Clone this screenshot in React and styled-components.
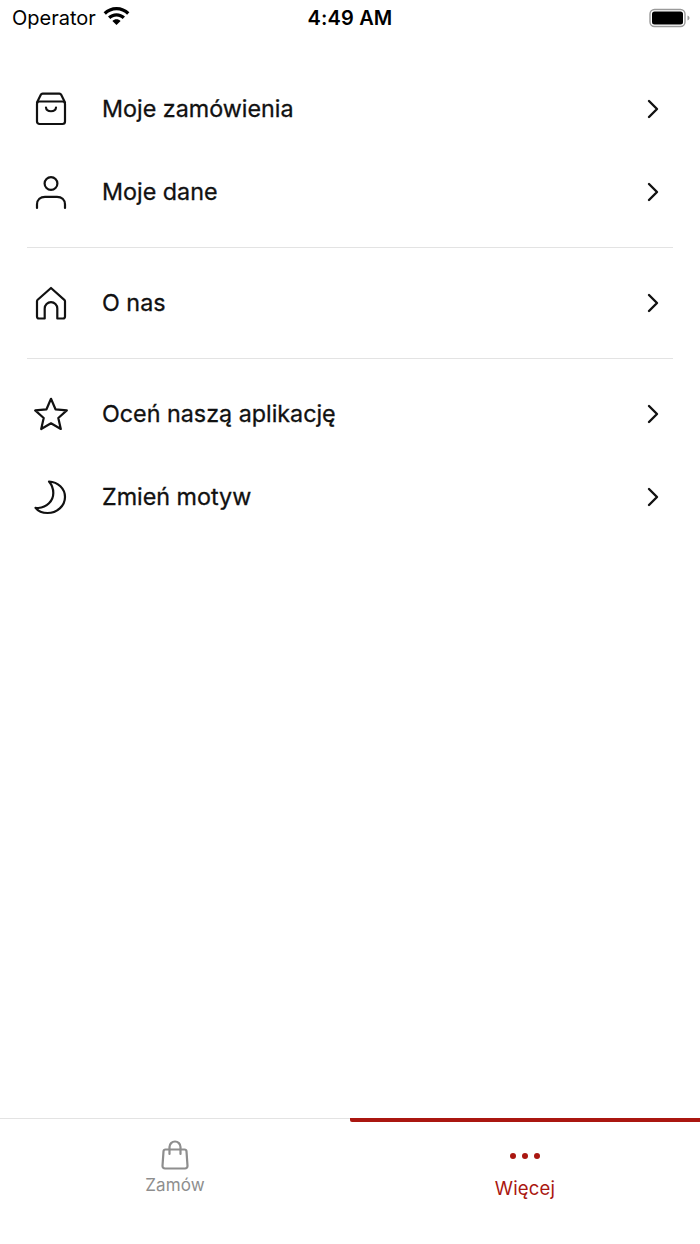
import React from "react";
import styled, { createGlobalStyle } from "styled-components";

const Global = createGlobalStyle`
  html, body { margin: 0; padding: 0; background: #fff; }
  body { font-family: Inter, "Liberation Sans", sans-serif; }
`;

const Page = styled.div`
  width: 700px;
  height: 1244px;
  display: flex;
  flex-direction: column;
  background: #fff;
  overflow: hidden;
`;

const StatusBar = styled.div`
  height: 36px;
  display: grid;
  grid-template-columns: 1fr auto 1fr;
  align-items: center;
  padding: 0 12px;
  color: #000;
`;
const Carrier = styled.div`
  display: flex;
  align-items: center;
  gap: 7px;
  font-size: 20px;
  line-height: 24px;
`;
const Clock = styled.div`
  font-size: 20px;
  font-weight: 600;
  letter-spacing: 0.15px;
  line-height: 24px;
`;
const Battery = styled.div`
  justify-self: end;
  display: flex;
  margin-right: -3px;
`;

const Menu = styled.div`
  flex: 1;
  padding: 31.5px 27px 0;
`;
const Group = styled.div`
  padding: 14px 0 13px;
  border-bottom: ${p => (p.$last ? "none" : "1px solid #e3e3e3")};
  &:first-child { padding-top: 0; }
`;
const Row = styled.div`
  height: 83px;
  display: flex;
  align-items: center;
  color: #111;
`;
const IconSlot = styled.div`
  width: 48px;
  height: 36px;
  display: flex;
  justify-content: center;
  align-items: center;
  margin-right: 27px;
`;
const Label = styled.div`
  flex: 1;
  font-size: 23.3px;
  font-weight: 400;
  line-height: 30px;
  color: #111;
  -webkit-text-stroke: 0.3px #111;
`;
const Chevron = styled.svg`
  width: 16px;
  height: 22px;
  margin-right: 11px;
`;

const TabBar = styled.div`
  height: 126px;
  border-top: 1px solid #e3e3e3;
  display: grid;
  grid-template-columns: 1fr 1fr;
  box-sizing: border-box;
`;
const Tab = styled.div`
  position: relative;
  display: flex;
  flex-direction: column;
  align-items: center;
  color: ${p => (p.$active ? "#aa1710" : "#8e8e8e")};
  padding-top: ${p => (p.$active ? "26px" : "21px")};
  &::before {
    content: "";
    display: ${p => (p.$active ? "block" : "none")};
    position: absolute;
    left: 0;
    right: 0;
    top: -1px;
    height: 4px;
    background: #aa1710;
    border-bottom-left-radius: 2px;
  }
`;
const TabLabel = styled.div`
  font-size: ${p => (p.$active ? "18.500px" : "17px")};
  line-height: 22px;
  letter-spacing: ${p => (p.$active ? "0.2px" : "0.1px")};
  margin-top: ${p => (p.$active ? "10px" : "4px")};
`;

const stroke = { fill: "none", stroke: "currentColor", strokeLinecap: "round", strokeLinejoin: "round" };

const BoxIcon = () => (
  <svg width="34" height="36" viewBox="0 0 34 36" {...stroke} strokeWidth="2.200">
    <path d="M3 11.500 6.800 3.800a2 2 0 0 1 1.800-1.100h16.800a2 2 0 0 1 1.800 1.100L31 11.500" />
    <rect x="3" y="10.500" width="28" height="22.500" rx="2.500" />
    <path d="M12 16.500c.5 5 9.500 5 10 0" />
  </svg>
);
const UserIcon = () => (
  <svg width="34" height="36" viewBox="0 0 34 36" {...stroke} strokeWidth="2.200">
    <circle cx="17" cy="9.500" r="6.400" />
    <path d="M3 34v-3.500C3 25.500 6.500 22.800 11 22.800h12c4.500 0 8 2.700 8 7.700V34" />
  </svg>
);
const HomeIcon = () => (
  <svg width="34" height="36" viewBox="0 0 34 36" {...stroke} strokeWidth="2.200">
    <path d="M17 3 3.700 14.800a2 2 0 0 0-.7 1.500v15.200a2 2 0 0 0 2 2h5.700V23.500a6.300 6.300 0 0 1 12.600 0v10H29a2 2 0 0 0 2-2V16.300a2 2 0 0 0-.7-1.500z" />
  </svg>
);
const StarIcon = () => (
  <svg width="34" height="36" viewBox="0 0 34 36" {...stroke} strokeWidth="2.200">
    <path d="M17 2.800 21.500 13.300 32.800 14.400 24.300 22 26.800 33 17 27.300 7.200 33 9.700 22 1.200 14.400 12.500 13.300z" />
  </svg>
);
const MoonIcon = () => (
  <svg width="34" height="36" viewBox="0 0 34 36" {...stroke} strokeWidth="2.200">
    <path d="M15 2.500C18 6 19.300 9.500 19.300 14c0 8-6.500 14.500-15 15-.9 0-1.800 0-2.800-.2C4 32 8.500 34 13.500 34 23 34 31 27 31 18 31 9.500 24 3 15 2.500z" />
  </svg>
);

const items = [
  [
    { icon: <BoxIcon />, label: "Moje zamówienia" },
    { icon: <UserIcon />, label: "Moje dane" },
  ],
  [{ icon: <HomeIcon />, label: "O nas" }],
  [
    { icon: <StarIcon />, label: "Oceń naszą aplikację" },
    { icon: <MoonIcon />, label: "Zmień motyw" },
  ],
];

export default function App() {
  return (
    <Page>
      <Global />
      <StatusBar>
        <Carrier>
          Operator
          <svg width="27" height="18" viewBox="0 0 27 18" style={{ marginTop: -5 }}>
            <path fill="#000" d="M13.500 0C8.500 0 4 2 .6 5.300l2.300 2.400C5.700 5 9.400 3.300 13.500 3.300s7.800 1.700 10.600 4.400l2.300-2.400C23 2 18.500 0 13.500 0z" />
            <path fill="#000" d="M13.500 6.200c-3.300 0-6.300 1.300-8.500 3.400l2.300 2.400c1.600-1.500 3.800-2.500 6.200-2.500s4.600 1 6.200 2.500L22 9.600c-2.200-2.100-5.200-3.400-8.500-3.400z" />
            <path fill="#000" d="M13.500 12.300c-1.600 0-3 .6-4.100 1.600l4.100 4.100 4.100-4.100c-1.100-1-2.500-1.600-4.100-1.600z" />
          </svg>
        </Carrier>
        <Clock>4:49 AM</Clock>
        <Battery>
          <svg width="42" height="20" viewBox="0 0 42 20">
            <rect x="1" y="1.500" width="35" height="17" rx="4.500" fill="none" stroke="#9a9a9a" strokeWidth="1.400" />
            <rect x="3" y="3.500" width="31" height="13" rx="2.500" fill="#000" />
            <path d="M38.500 7.500c1.200.4 2 1.300 2 2.500s-.8 2.100-2 2.500z" fill="#9a9a9a" />
          </svg>
        </Battery>
      </StatusBar>
      <Menu>
        {items.map((group, i) => (
          <Group key={i} $last={i === items.length - 1}>
            {group.map(item => (
              <Row key={item.label}>
                <IconSlot>{item.icon}</IconSlot>
                <Label>{item.label}</Label>
                <Chevron viewBox="0 0 16 22" fill="none" stroke="#111" strokeWidth="2.400" strokeLinecap="round" strokeLinejoin="round">
                  <path d="M3 3l8 8-8 8" />
                </Chevron>
              </Row>
            ))}
          </Group>
        ))}
      </Menu>
      <TabBar>
        <Tab>
          <svg width="28" height="30" viewBox="0 0 28 30" fill="none" stroke="currentColor" strokeWidth="2.200" strokeLinecap="round" strokeLinejoin="round">
            <path d="M4.500 9.500h19a2 2 0 0 1 2 1.800l1 14.500a2.500 2.500 0 0 1-2.500 2.700H4a2.500 2.500 0 0 1-2.500-2.700l1-14.500a2 2 0 0 1 2-1.800z" />
            <path d="M8.500 14V7a5.500 5.500 0 0 1 11 0v7" />
          </svg>
          <TabLabel>Zamów</TabLabel>
        </Tab>
        <Tab $active>
          <svg width="32" height="22" viewBox="0 0 32 22" fill="currentColor">
            <circle cx="4" cy="11" r="3" />
            <circle cx="16" cy="11" r="3" />
            <circle cx="28" cy="11" r="3" />
          </svg>
          <TabLabel $active>Więcej</TabLabel>
        </Tab>
      </TabBar>
    </Page>
  );
}
